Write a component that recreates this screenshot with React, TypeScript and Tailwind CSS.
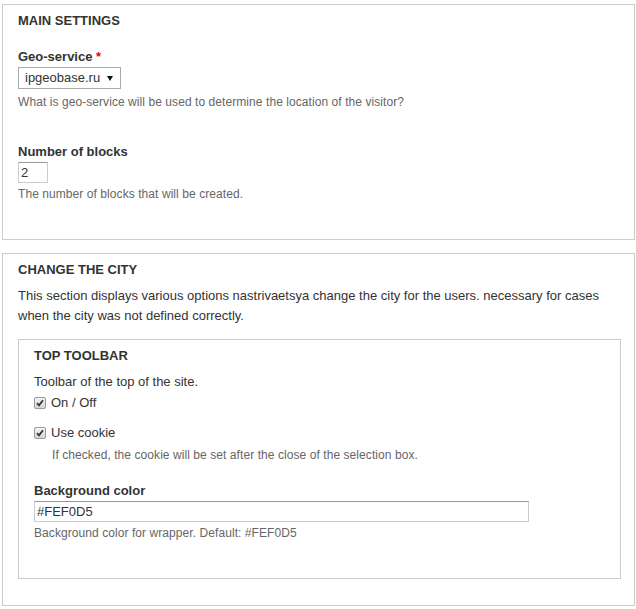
import React from 'react';

function Check({ label }: { label: string }) {
  return (
    <label className="flex items-center leading-[16px]">
      <span className="flex h-[12px] w-[12px] items-center justify-center rounded-[2px] border border-[#9a9a9a] bg-gradient-to-b from-[#f4f4f4] to-[#d6d6d6]">
        <svg width="8" height="8" viewBox="0 0 8 8">
          <path d="M1 4.2 L3 6.4 L7 1.2" fill="none" stroke="#333" strokeWidth="1.8" />
        </svg>
      </span>
      <span className="ml-[5px]">{label}</span>
    </label>
  );
}

export default function App() {
  return (
    <div className="min-h-screen bg-white pl-[2px] pr-[1px] pt-[4px] pb-[4px] font-['Liberation_Sans',Arial,sans-serif] text-[13px] text-[#333]">
      {/* Main settings */}
      <div className="border border-[#ccc] pl-[15px] pr-[13px] pt-[8px] pb-[37px]">
        <h2 className="font-bold leading-[16px]">MAIN SETTINGS</h2>

        <div className="mt-[20px] font-bold leading-[16px]">
          Geo-service <span className="text-[#e00]">*</span>
        </div>
        <div className="mt-[2px] flex h-[22px] w-[103px] items-center border border-[#aaa] bg-white pl-[6px]">
          <span className="leading-[16px]">ipgeobase.ru</span>
          <svg className="ml-auto mr-[7px]" width="6" height="5" viewBox="0 0 6 5">
            <polygon points="0,0 6,0 3,5" fill="#111" />
          </svg>
        </div>
        <p className="mt-[5px] text-[12px] leading-[16px] tracking-[0.07px] text-[#666]">
          What is geo-service will be used to determine the location of the visitor?
        </p>

        <div className="mt-[34px] font-bold leading-[16px]">Number of blocks</div>
        <div className="mt-[2px] flex h-[21px] w-[30px] items-center border border-[#ccc] border-t-[#999] pl-[2px] leading-[16px]">
          2
        </div>
        <p className="mt-[3px] text-[12px] leading-[16px] tracking-[0.07px] text-[#666]">
          The number of blocks that will be created.
        </p>
      </div>

      {/* Change the city */}
      <div className="mt-[13px] border border-[#ccc] pl-[15px] pr-[13px] pt-[8px] pb-[26px]">
        <h2 className="font-bold leading-[16px]">CHANGE THE CITY</h2>
        <p className="mt-[8px] whitespace-nowrap leading-[20px]">
          This section displays various options nastrivaetsya change the city for the users. necessary for cases
          <br />
          when the city was not defined correctly.
        </p>

        <div className="mt-[13px] border border-[#ccc] pl-[15px] pr-[15px] pt-[8px] pb-[37px]">
          <h3 className="font-bold leading-[16px]">TOP TOOLBAR</h3>
          <p className="mt-[8px] leading-[20px]">Toolbar of the top of the site.</p>
          <div className="mt-[3px]">
            <Check label="On / Off" />
          </div>
          <div className="mt-[14px]">
            <Check label="Use cookie" />
          </div>
          <p className="mt-[6px] pl-[18px] text-[12px] leading-[16px] tracking-[0.07px] text-[#666]">
            If checked, the cookie will be set after the close of the selection box.
          </p>

          <div className="mt-[20px] font-bold leading-[16px]">Background color</div>
          <div className="mt-[2px] flex h-[21px] w-[495px] items-center border border-[#ccc] border-t-[#999] pl-[2px] leading-[16px]">
            #FEF0D5
          </div>
          <p className="mt-[3px] text-[12px] leading-[16px] tracking-[0.07px] text-[#666]">
            Background color for wrapper. Default: #FEF0D5
          </p>
        </div>
      </div>
    </div>
  );
}
